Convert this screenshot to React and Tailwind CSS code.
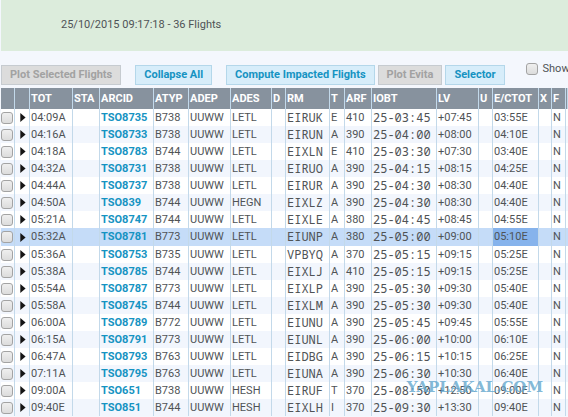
import React, { useState } from 'react';

const COLUMNS = [
  { label: '', width: 'w-[14px]' },
  { label: '', width: 'w-[15px]' },
  { label: 'TOT', width: 'w-[43px]' },
  { label: 'STA', width: 'w-[27px]' },
  { label: 'ARCID', width: 'w-[54px]' },
  { label: 'ATYP', width: 'w-[35px]' },
  { label: 'ADEP', width: 'w-[42px]' },
  { label: 'ADES', width: 'w-[41px]' },
  { label: 'D', width: 'w-[14px]' },
  { label: 'RM', width: 'w-[44px]' },
  { label: 'T', width: 'w-[15px]' },
  { label: 'ARF', width: 'w-[27px]' },
  { label: 'IOBT', width: 'w-[65px]' },
  { label: 'LV', width: 'w-[42px]' },
  { label: 'U', width: 'w-[14px]' },
  { label: 'E/CTOT', width: 'w-[46px]' },
  { label: 'X', width: 'w-[13px]' },
  { label: 'F', width: 'w-[14px]' },
  { label: '', width: '' },
];

// tot, arcid, atyp, ades, rm, t, arf, iobt, lv, ctot
const FLIGHTS = [
  ['04:09A', 'TSO8735', 'B738', 'LETL', 'EIRUK', 'E', '410', '25-03:45', '+07:45', '03:55E'],
  ['04:16A', 'TSO8733', 'B738', 'LETL', 'EIRUN', 'A', '390', '25-04:00', '+08:00', '04:10E'],
  ['04:18A', 'TSO8783', 'B744', 'LETL', 'EIXLN', 'E', '410', '25-03:30', '+07:30', '03:40E'],
  ['04:32A', 'TSO8731', 'B738', 'LETL', 'EIRUO', 'A', '390', '25-04:15', '+08:15', '04:25E'],
  ['04:44A', 'TSO8737', 'B738', 'LETL', 'EIRUR', 'A', '390', '25-04:30', '+08:30', '04:40E'],
  ['04:50A', 'TSO839', 'B744', 'HEGN', 'EIXLZ', 'A', '390', '25-04:30', '+08:30', '04:40E'],
  ['05:21A', 'TSO8747', 'B744', 'LETL', 'EIXLE', 'A', '380', '25-04:45', '+08:45', '04:55E'],
  ['05:32A', 'TSO8781', 'B773', 'LETL', 'EIUNP', 'A', '380', '25-05:00', '+09:00', '05:10E'],
  ['05:36A', 'TSO8753', 'B735', 'LETL', 'VPBYQ', 'A', '370', '25-05:15', '+09:15', '05:25E'],
  ['05:38A', 'TSO8785', 'B744', 'LETL', 'EIXLJ', 'A', '410', '25-05:15', '+09:15', '05:25E'],
  ['05:54A', 'TSO8787', 'B773', 'LETL', 'EIXLP', 'A', '390', '25-05:30', '+09:30', '05:40E'],
  ['05:58A', 'TSO8745', 'B744', 'LETL', 'EIXLM', 'A', '390', '25-05:30', '+09:30', '05:40E'],
  ['06:00A', 'TSO8789', 'B772', 'LETL', 'EIUNU', 'A', '390', '25-05:45', '+09:45', '05:55E'],
  ['06:15A', 'TSO8791', 'B773', 'LETL', 'EIUNL', 'A', '390', '25-06:00', '+10:00', '06:10E'],
  ['06:47A', 'TSO8793', 'B763', 'LETL', 'EIDBG', 'A', '390', '25-06:15', '+10:15', '06:25E'],
  ['07:11A', 'TSO8795', 'B763', 'LETL', 'EIUNA', 'A', '390', '25-06:30', '+10:30', '06:40E'],
  ['09:00A', 'TSO651', 'B738', 'HESH', 'EIRUF', 'T', '370', '25-08:50', '+12:50', '09:00E'],
  ['09:40E', 'TSO851', 'B744', 'HESH', 'EIXLH', 'I', '370', '25-09:30', '+13:30', '09:40E'],
];

const SELECTED = 'TSO8781';

function ToolButton({ disabled, children }) {
  return (
    <button
      type="button"
      disabled={disabled}
      className={`h-[20px] shrink-0 border px-2 leading-[18px] font-bold whitespace-nowrap ${
        disabled
          ? 'border-[#c6cbd0] bg-[#dcdcdc] text-[#a2a2a2]'
          : 'border-[#b4d7ea] bg-[#d7edfa] text-[#1593c2]'
      }`}
    >
      {children}
    </button>
  );
}

function Checkbox({ label, checked, onChange }) {
  return (
    <input
      type="checkbox"
      aria-label={label}
      checked={checked}
      onChange={onChange}
      className="block size-[12px] shrink-0 appearance-none rounded-[3px] border border-[#a3a3a3] bg-linear-to-b from-[#efefef] to-[#dcdcdc] checked:bg-[#1593c2]"
    />
  );
}

function Cell({ className = '', children }) {
  return (
    <td className={`border-r border-[#c3d9ea] p-0 pl-px whitespace-nowrap ${className}`}>{children}</td>
  );
}

function MonoCell({ children }) {
  return (
    <Cell className="font-['Noto_Sans_Mono','DejaVu_Sans_Mono',monospace] text-[12px] leading-[16px]">
      {children}
    </Cell>
  );
}

function FlightRow({ flight, checked, onToggle }) {
  const [tot, arcid, atyp, ades, rm, t, arf, iobt, lv, ctot] = flight;
  const selected = arcid === SELECTED;

  return (
    <tr className={selected ? 'h-[18px] bg-[#c5dcf8]' : 'h-[17px] odd:bg-white even:bg-[#f2f6fd]'}>
      <td className="border-r border-[#c3d9ea] p-0">
        <Checkbox label={`Select ${arcid}`} checked={checked} onChange={onToggle} />
      </td>
      <Cell>
        <button type="button" aria-label={`Expand ${arcid}`} className="block pl-[4px]">
          <svg viewBox="0 0 6 9" className="block h-[9px] w-[6px] fill-[#151515]">
            <path d="M0.3 0L5.6 4.5L0.3 9Z" />
          </svg>
        </button>
      </Cell>
      <Cell>{tot}</Cell>
      <Cell />
      <Cell>
        <a href={`#${arcid}`} className="font-bold text-[#1593c2]">{arcid}</a>
      </Cell>
      <Cell>{atyp}</Cell>
      <Cell>UUWW</Cell>
      <Cell>{ades}</Cell>
      <Cell />
      <MonoCell>{rm}</MonoCell>
      <Cell>{t}</Cell>
      <Cell>{arf}</Cell>
      <MonoCell>{iobt}</MonoCell>
      <Cell>{lv}</Cell>
      <Cell />
      <Cell className={selected ? 'bg-[#86b3ec]' : ''}>{ctot}</Cell>
      <Cell />
      <Cell>N</Cell>
      <td />
    </tr>
  );
}

export default function App() {
  const [checked, setChecked] = useState({});
  const [showAll, setShowAll] = useState(false);

  const toggle = (arcid) => setChecked((prev) => ({ ...prev, [arcid]: !prev[arcid] }));

  return (
    <div className="relative min-h-screen overflow-hidden bg-[#f4f7fd] pl-px font-[Roboto,sans-serif] text-[11px] leading-[16px] text-[#4f5356]">
      <header className="bg-[#dcecdc] px-[60px] pt-[17px] pb-[18px]">
        25/10/2015 09:17:18 - 36 Flights
      </header>

      <div className="flex overflow-hidden pt-[14px] pb-[3px]">
        <div className="flex gap-[14px]">
          <ToolButton disabled>Plot Selected Flights</ToolButton>
          <ToolButton>Collapse All</ToolButton>
          <div className="flex gap-[3px]">
            <ToolButton>Compute Impacted Flights</ToolButton>
            <ToolButton disabled>Plot Evita</ToolButton>
            <ToolButton>Selector</ToolButton>
          </div>
        </div>
        <label className="-mt-[4px] ml-[21px] flex items-center gap-[5px] self-start whitespace-nowrap">
          <Checkbox checked={showAll} onChange={() => setShowAll(!showAll)} />
          Show
        </label>
      </div>

      <table className="w-full table-fixed border-separate border-spacing-0">
        <colgroup>
          {COLUMNS.map((col, i) => (
            <col key={i} className={col.width} />
          ))}
        </colgroup>
        <thead>
          <tr className="h-[21px] bg-[#87929e]">
            {COLUMNS.map((col, i) => (
              <th
                key={i}
                className="border-r border-[#c3d9ea] p-0 pl-px text-left font-bold whitespace-nowrap text-white"
              >
                {col.label}
              </th>
            ))}
          </tr>
        </thead>
        <tbody>
          {FLIGHTS.map((flight) => (
            <FlightRow
              key={flight[1]}
              flight={flight}
              checked={!!checked[flight[1]]}
              onToggle={() => toggle(flight[1])}
            />
          ))}
        </tbody>
      </table>

      <div className="pointer-events-none absolute right-[25px] bottom-[20px] font-['DejaVu_Serif',serif] text-[15px] leading-[20px] font-bold text-[#62a6cd]/80">
        YAPLAKAL.COM
      </div>
    </div>
  );
}
